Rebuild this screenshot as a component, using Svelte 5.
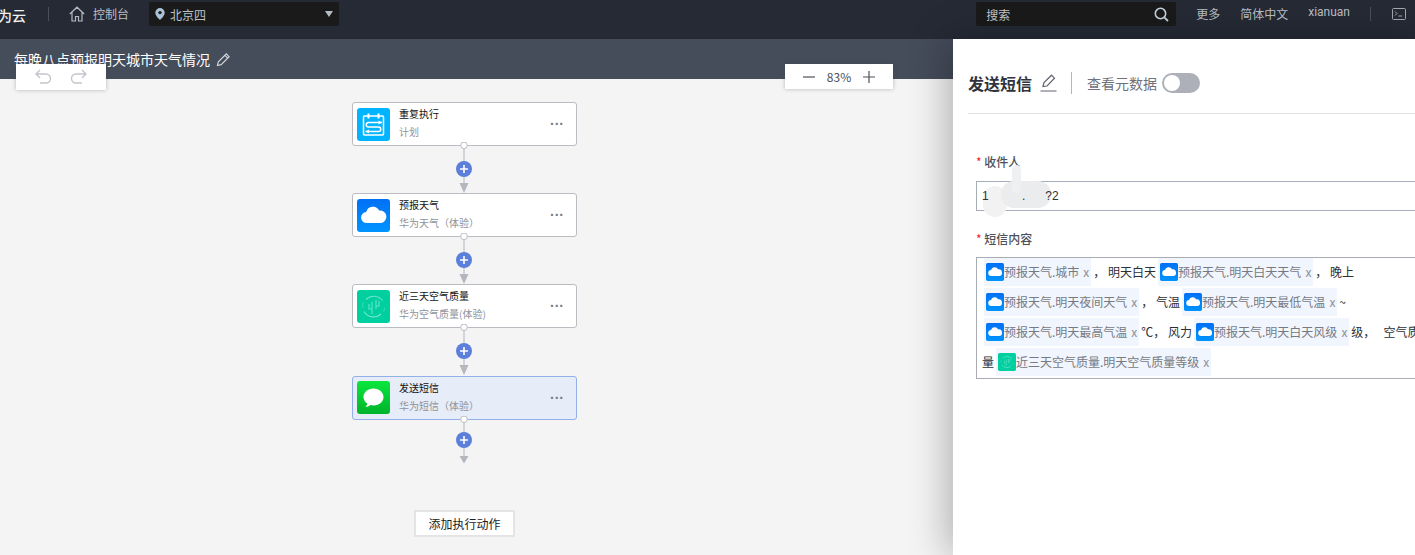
<script>
	const nodes = [
		{ title: '重复执行', sub: '计划', icon: 'schedule' },
		{ title: '预报天气', sub: '华为天气（体验）', icon: 'cloud' },
		{ title: '近三天空气质量', sub: '华为空气质量(体验)', icon: 'air' },
		{ title: '发送短信', sub: '华为短信（体验）', icon: 'sms', active: true }
	];

	// text runs of the sms editor, tags carry their source icon
	const content = [
		{ tag: '预报天气.城市', icon: 'cloud' },
		{ text: '， 明天白天' },
		{ tag: '预报天气.明天白天天气', icon: 'cloud' },
		{ text: '， 晚上' },
		{ br: true },
		{ tag: '预报天气.明天夜间天气', icon: 'cloud' },
		{ text: '， 气温' },
		{ tag: '预报天气.明天最低气温', icon: 'cloud' },
		{ text: '~' },
		{ br: true },
		{ tag: '预报天气.明天最高气温', icon: 'cloud' },
		{ text: '℃， 风力' },
		{ tag: '预报天气.明天白天风级', icon: 'cloud' },
		{ text: '级，   空气质' },
		{ br: true },
		{ text: '量' },
		{ tag: '近三天空气质量.明天空气质量等级', icon: 'air' }
	];
</script>

{#snippet appIcon(kind)}
	<svg class="app-icon" viewBox="0 0 33 33">
		{#if kind === 'schedule'}
			<rect width="33" height="33" rx="3" fill="#00b4ff" />
			<rect x="6.500" y="8" width="20" height="19" rx="1" fill="none" stroke="#fff" stroke-width="1.500" />
			<path d="M11.500 5.500v5M21.500 5.500v5" stroke="#fff" stroke-width="2" />
			<path d="M25 14.500H11.500a2.200 2.200 0 0 0 0 4.500H21.500a2.200 2.200 0 0 1 0 4.500H8.500" fill="none" stroke="#fff" stroke-width="1.500" />
			<path d="M21.500 12.500 25 14.500 21.500 16.500zM12 21.500 8.500 23.500 12 25.500z" fill="#fff" />
		{:else if kind === 'cloud'}
			<defs>
				<linearGradient id="cloudbg" x1="0" y1="0" x2="0" y2="1">
					<stop offset="0" stop-color="#0070f5" />
					<stop offset="1" stop-color="#0094ff" />
				</linearGradient>
			</defs>
			<rect width="33" height="33" rx="3" fill="url(#cloudbg)" />
			<path d="M10 24a5.500 5.500 0 0 1-.8-11 7 7 0 0 1 13-1.500A6.300 6.300 0 0 1 24 24z" fill="#fff" />
		{:else if kind === 'air'}
			<rect width="33" height="33" rx="3" fill="#00cfa0" />
			<path d="M25.500 10.500a11 11 0 0 0-16.500-1M7 21.500a11 11 0 0 0 17 2.500" fill="none" stroke="#6fe6ca" stroke-width="1.200" />
			<path d="M5.800 18a11 11 0 0 1 .4-6M27.500 17.500a11 11 0 0 1-1 4.500" fill="none" stroke="#33d8b2" stroke-width="1.200" />
			<path d="M15 12v12M19 10v9M15 19h-3v-5M19 16h3v-5" fill="none" stroke="#4fe0bf" stroke-width="1.400" />
		{:else}
			<defs>
				<linearGradient id="smsbg" x1="0" y1="0" x2="0" y2="1">
					<stop offset="0" stop-color="#0ae63c" />
					<stop offset="1" stop-color="#00b32c" />
				</linearGradient>
			</defs>
			<rect width="33" height="33" rx="3" fill="url(#smsbg)" />
			<path d="M16.500 7.500c5.800 0 10 3.700 10 8.500s-4.200 8.500-10 8.500c-1.100 0-2.100-.1-3-.4-1.500 1.300-3.300 2-5.200 2 1.100-1 1.800-2.200 2-3.600-2.400-1.500-3.800-3.800-3.800-6.500 0-4.800 4.200-8.500 10-8.500z" fill="#fff" />
		{/if}
	</svg>
{/snippet}

{#snippet connector(last)}
	{@const plusY = last ? 24 : 27}
	{@const arrowY = last ? 40 : 41}
	{@const arrowH = last ? 7.500 : 10}
	<div class="connector">
		<svg viewBox="0 0 24 56" width="24" height="56">
			<path d="M12 3v{arrowY - 3}" stroke="#c8cad0" stroke-width="1.500" />
			<circle cx="12" cy="3.300" r="3.300" fill="#fff" stroke="#b9bcc4" />
			<path d="M7.500 {arrowY}h9L12 {arrowY + arrowH}z" fill="#b4b7be" />
			<circle cx="12" cy={plusY} r="8" fill="#5b7fdb" />
			<path d="M8 {plusY}h8M12 {plusY - 4}v8" stroke="#fff" stroke-width="1.600" />
		</svg>
	</div>
{/snippet}

<div class="page">
	<header class="topbar">
		<span class="brand">为云</span>
		<span class="sep"></span>
		<svg class="home" viewBox="0 0 16 16" width="16" height="16">
			<path d="M.8 8 8 1.200 15.200 8M3 6.500V15h3.500v-4.500h3V15H13V6.500" fill="none" stroke="#b6bac2" stroke-width="1.200" />
		</svg>
		<span class="nav console">控制台</span>
		<div class="region">
			<svg viewBox="0 0 10 12" width="10" height="12">
				<path d="M5 0a4.700 4.700 0 0 0-4.700 4.700C.3 8 5 12 5 12s4.700-4 4.700-7.300A4.700 4.700 0 0 0 5 0z" fill="#a9c2d6" />
				<circle cx="5" cy="4.600" r="1.700" fill="#1a1a1a" />
			</svg>
			<span>北京四</span>
			<i class="caret"></i>
		</div>
		<div class="search">
			<span>搜索</span>
			<svg viewBox="0 0 15 15" width="15" height="15">
				<circle cx="6.500" cy="6.500" r="5.200" fill="none" stroke="#c5d3dc" stroke-width="1.600" />
				<path d="M10.300 10.300 14 14" stroke="#c5d3dc" stroke-width="1.800" />
			</svg>
		</div>
		<span class="nav more">更多</span>
		<span class="nav lang">简体中文</span>
		<span class="nav user">xianuan</span>
		<span class="sep right"></span>
		<svg class="term" viewBox="0 0 14 12" width="14" height="12">
			<rect x=".5" y=".5" width="13" height="11" rx="1" fill="none" stroke="#a4a8b0" />
			<path d="M3 3.500 5 5.500 3 7.500M6.500 8h3.500" fill="none" stroke="#a4a8b0" />
		</svg>
	</header>

	<div class="workspace">
		<div class="titlebar">
			<span class="flow-name">每晚八点预报明天城市天气情况</span>
			<svg viewBox="0 0 16 16" width="15" height="15">
				<path d="M1.500 14.500 2.500 10.500 11 2l3 3-8.500 8.500zM9.500 3.500l3 3" fill="none" stroke="#d5d8dd" stroke-width="1.200" />
			</svg>
		</div>

		<div class="float undo">
			<svg viewBox="0 0 18 16" width="18" height="16">
				<path d="M6 1 2 5l4 4M2 5h10a4 4 0 0 1 0 9H6" fill="none" stroke="#c2c5cb" stroke-width="1.400" />
			</svg>
			<svg viewBox="0 0 18 16" width="18" height="16">
				<path d="M12 1l4 4-4 4M16 5H6a4 4 0 0 0 0 9h6" fill="none" stroke="#c2c5cb" stroke-width="1.400" />
			</svg>
		</div>
		<div class="float zoom">
			<svg viewBox="0 0 12 12" width="12" height="12"><path d="M0 6h12" stroke="#4d5058" stroke-width="1.200" /></svg>
			<span>83%</span>
			<svg viewBox="0 0 12 12" width="12" height="12"><path d="M0 6h12M6 0v12" stroke="#4d5058" stroke-width="1.200" /></svg>
		</div>

		<main class="canvas">
			{#each nodes as node, i}
				<div class="node" class:active={node.active}>
					{@render appIcon(node.icon)}
					<div class="node-text">
						<div class="node-title">{node.title}</div>
						<div class="node-sub">{node.sub}</div>
					</div>
					<span class="dots">···</span>
				</div>
				{@render connector(i === nodes.length - 1)}
			{/each}
			<button class="add-action">添加执行动作</button>
		</main>

		<aside class="panel">
			<div class="panel-head">
				<h2>发送短信</h2>
				<svg viewBox="0 0 17 18" width="17" height="18">
					<path d="M3 12.500 4 8.500 11.500 1.200l3 3L7 12zM.5 17h16" fill="none" stroke="#62656e" stroke-width="1.200" />
				</svg>
				<span class="head-sep"></span>
				<span class="meta">查看元数据</span>
				<span class="switch"><i></i></span>
			</div>
			<div class="form">
				<label><b>*</b> 收件人</label>
				<div class="input"><span>1&nbsp;&nbsp;&nbsp;&nbsp;&nbsp;&nbsp;&nbsp;&nbsp;&nbsp;&nbsp;.&nbsp;&nbsp;&nbsp;&nbsp;&nbsp;&nbsp;?2</span></div>
				<span class="smear tail"></span>
				<span class="smear blob"></span>
				<span class="smear streak"></span>
				<label class="second"><b>*</b> 短信内容</label>
				<div class="editor">
					{#each content as part}
						{#if part.br}
							<br />
						{:else if part.tag}
							<span class="tag">
								<span class="tag-icon">{@render appIcon(part.icon)}</span>{part.tag}<em>x</em>
							</span>
						{:else}
							<span class="plain">{part.text}</span>
						{/if}
					{/each}
				</div>
			</div>
		</aside>
	</div>
</div>

<style>
	:global(body) {
		margin: 0;
		overflow: hidden;
	}
	.page {
		width: 1415px;
		height: 555px;
		overflow: hidden;
		display: flex;
		flex-direction: column;
		font-family: "Noto Sans CJK SC", "Liberation Sans", sans-serif;
		font-size: 12px;
		background: #f4f4f4;
	}
	.topbar {
		height: 39px;
		flex: none;
		display: flex;
		align-items: flex-start;
		background: #252a35;
		color: #bbbfc6;
	}
	.brand {
		margin: 5px 0 0 -2px;
		font-size: 14px;
		line-height: 20px;
		font-weight: 500;
		color: #f0f0f0;
	}
	.sep {
		width: 1px;
		height: 14px;
		margin: 7px 20px 0 22px;
		background: #4a4f5a;
	}
	.home {
		margin: 6px 8px 0 0;
	}
	.nav {
		line-height: 18px;
		margin-top: 5px;
	}
	.region {
		width: 190px;
		height: 24px;
		margin: 2px 0 0 20px;
		padding: 0 6px;
		box-sizing: border-box;
		display: flex;
		align-items: center;
		gap: 5px;
		background: #1a1a1a;
		border-radius: 2px;
		color: #bcc2c9;
	}
	.caret {
		margin-left: auto;
		margin-right: 0;
		border: 4px solid transparent;
		border-top: 6px solid #b4bcc4;
		border-bottom: 0;
	}
	.search {
		width: 200px;
		height: 24px;
		margin: 2px 20px 0 auto;
		padding: 0 7px 0 10px;
		box-sizing: border-box;
		display: flex;
		align-items: center;
		justify-content: space-between;
		background: #1a1a1a;
		border-radius: 2px;
		color: #c2c6cc;
	}
	.lang {
		margin-left: 20px;
	}
	.user {
		margin-left: 20px;
		margin-top: 3px;
		font-family: "Roboto", "Liberation Sans", sans-serif;
	}
	.sep.right {
		margin: 7px 21px 0 20px;
	}
	.term {
		margin: 8px 9px 0 0;
	}
	.workspace {
		position: relative;
		flex: 1;
		min-height: 0;
	}
	.titlebar {
		height: 40px;
		display: flex;
		align-items: center;
		gap: 6px;
		padding: 0 0 0 14px;
		background: #454c5a;
		color: #fff;
	}
	.flow-name {
		font-size: 14px;
	}
	.float {
		position: absolute;
		top: 25px;
		display: flex;
		align-items: center;
		background: #fff;
		box-shadow: 0 0 4px rgba(60, 65, 80, 0.35);
		z-index: 2;
	}
	.undo {
		left: 16px;
		width: 90px;
		height: 26px;
		justify-content: center;
		gap: 18px;
	}
	.zoom {
		left: 785px;
		width: 108px;
		height: 25px;
		justify-content: center;
		gap: 12px;
		color: #4d5058;
	}
	.canvas {
		width: 929px;
		display: flex;
		flex-direction: column;
		align-items: center;
		padding-top: 23px;
	}
	.node {
		width: 225px;
		height: 44px;
		box-sizing: border-box;
		flex: none;
		display: flex;
		align-items: center;
		gap: 9px;
		padding: 0 12px 0 4px;
		background: #fff;
		border: 1px solid #babcc2;
		border-radius: 3px;
	}
	.node.active {
		background: #e6ecf8;
		border-color: #94b0e8;
	}
	.app-icon {
		display: block;
		width: 33px;
		height: 33px;
		flex: none;
	}
	.node-text {
		flex: 1;
		font-size: 10px;
		line-height: 14px;
		position: relative;
		top: -1px;
	}
	.node-title {
		color: #111;
		margin-bottom: 4px;
	}
	.node-sub {
		color: #8f939b;
	}
	.dots {
		color: #777b84;
		font-size: 14px;
		font-weight: 700;
		font-family: "Liberation Sans", sans-serif;
	}
	.connector {
		height: 47.2px;
		flex: none;
		position: relative;
		width: 24px;
	}
	.connector svg {
		position: absolute;
		top: -4px;
		left: -0.5px;
	}
	.add-action {
		width: 101px;
		height: 27px;
		margin-top: 43.2px;
		padding: 0;
		background: #fff;
		border: 2px solid #e4e4e4;
		font: inherit;
		color: #222;
	}
	.panel {
		position: absolute;
		top: 0;
		left: 953px;
		width: 480px;
		bottom: 0;
		box-sizing: border-box;
		padding: 0 0 0 15px;
		background: #fff;
		box-shadow: -6px 0 36px rgba(0, 0, 0, 0.28);
		z-index: 3;
	}
	.panel-head {
		height: 75px;
		display: flex;
		align-items: center;
		padding-top: 13px;
		box-sizing: border-box;
		border-bottom: 1px solid #e2e3e6;
	}
	h2 {
		margin: 0 8px 0 0;
		font-size: 16px;
		font-weight: 700;
		color: #30333b;
	}
	.head-sep {
		width: 1px;
		height: 22px;
		margin: 0 15px 0 14px;
		background: #b5b7bd;
	}
	.meta {
		font-size: 14px;
		color: #6e717a;
	}
	.switch {
		width: 38px;
		height: 20px;
		margin-left: 5px;
		padding: 2px;
		box-sizing: border-box;
		border-radius: 10px;
		background: #adb0b8;
	}
	.switch i {
		display: block;
		width: 16px;
		height: 16px;
		border-radius: 50%;
		background: #fff;
	}
	.form {
		position: relative;
		padding: 39px 0 0 8px;
	}
	label {
		display: block;
		line-height: 18px;
		font-weight: 500;
		color: #4e5159;
	}
	label b {
		color: #f5222d;
		font-weight: 400;
	}
	.second {
		margin-top: 19px;
	}
	.input {
		height: 30px;
		margin-top: 10px;
		padding: 0 5px;
		box-sizing: border-box;
		line-height: 28px;
		border: 1px solid #a6adb8;
		color: #333;
		font-family: "Liberation Sans", sans-serif;
	}
	.input span {
		position: relative;
		z-index: 1;
	}
	/* the scribble that hides the phone number in the screenshot */
	.smear {
		position: absolute;
	}
	.tail {
		left: 15px;
		top: 72px;
		width: 24px;
		height: 31px;
		border-radius: 12px;
		background: #f2f2f3;
	}
	.blob {
		left: 33px;
		top: 67px;
		width: 50px;
		height: 27px;
		border-radius: 13px;
		background: #ebecee;
	}
	.streak {
		left: 44px;
		top: 51px;
		width: 9px;
		height: 28px;
		border-radius: 5px;
		background: #eef0f1;
	}
	.editor {
		margin-top: 9px;
		height: 122px;
		box-sizing: border-box;
		padding: 0 5px;
		border: 1px solid #a9acb3;
		line-height: 30px;
		color: #2c2f36;
		overflow: hidden;
	}
	.tag {
		display: inline-block;
		height: 28px;
		line-height: 28px;
		padding: 0 2px;
		margin: 0 2px;
		vertical-align: top;
		background: #f1f5fd;
		color: #767a83;
		white-space: nowrap;
	}
	.tag-icon {
		display: inline-block;
		width: 18px;
		height: 18px;
		vertical-align: -4px;
	}
	.tag-icon :global(svg) {
		width: 18px;
		height: 18px;
	}
	.tag em {
		font-style: normal;
		margin-left: 4px;
		color: #8c9098;
	}
	.plain {
		display: inline-block;
		height: 28px;
		line-height: 28px;
		vertical-align: top;
		white-space: pre;
	}
</style>
